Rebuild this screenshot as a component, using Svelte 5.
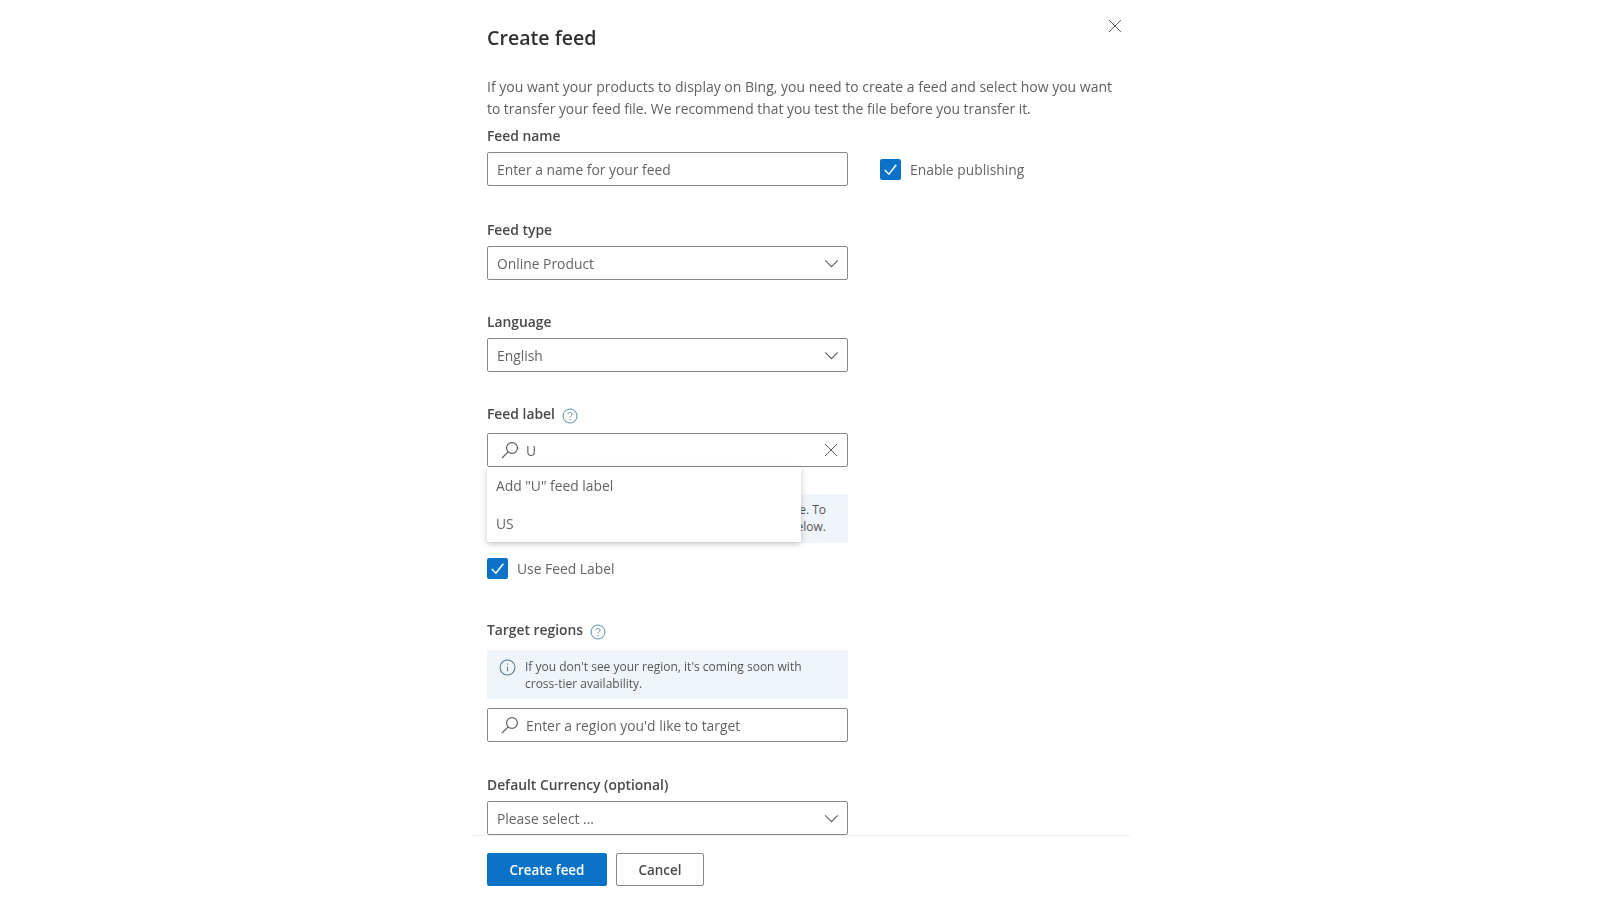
<script>
	const groups = [
		{ label: "Feed type", value: "Online Product" },
		{ label: "Language", value: "English" }
	];
</script>

{#snippet chevron()}
	<svg class="chevron" viewBox="0 0 16 10" aria-hidden="true">
		<path d="M1 1.5 8 8.5 15 1.5" />
	</svg>
{/snippet}

{#snippet search()}
	<svg class="search" viewBox="0 0 18 18" aria-hidden="true">
		<circle cx="11" cy="7" r="5.4" />
		<path d="M7.2 10.8 1 17" />
	</svg>
{/snippet}

{#snippet help()}
	<svg class="help" viewBox="0 0 16 16" aria-hidden="true">
		<circle cx="8" cy="8" r="7" />
		<path d="M6 6.3C6 3.8 10 3.8 10 6.2 10 7.8 8 7.8 8 9.6" />
		<circle class="dot" cx="8" cy="11.8" r="0.7" />
	</svg>
{/snippet}

{#snippet checkbox()}
	<span class="checkbox">
		<svg viewBox="0 0 20 20" aria-hidden="true">
			<path d="M4.5 10.5 8.5 14.5 15.5 5.5" />
		</svg>
	</span>
{/snippet}

<div class="panel">
	<button class="close" aria-label="Close">
		<svg viewBox="0 0 14 14"><path d="M1 1 13 13M13 1 1 13" /></svg>
	</button>

	<h1>Create feed</h1>
	<p class="intro">
		<span class="line-one">If you want your products to display on Bing, you need to create a feed and select how you want</span>
		to transfer your feed file. We recommend that you test the file before you transfer it.
	</p>

	<div class="label first">Feed name</div>
	<div class="row">
		<div class="control placeholder">Enter a name for your feed</div>
		<div class="check publish">
			{@render checkbox()}
			<span>Enable publishing</span>
		</div>
	</div>

	{#each groups as group, i}
		<div class="label" class:tight={i === 1}>{group.label}</div>
		<div class="control">
			<span>{group.value}</span>
			{@render chevron()}
		</div>
	{/each}

	<div class="label tight with-help feed-label">Feed label {@render help()}</div>
	<div class="control with-search">
		{@render search()}
		<span>U</span>
		<svg class="clear" viewBox="0 0 14 14" aria-hidden="true"><path d="M1 1 13 13M13 1 1 13" /></svg>
	</div>

	<div class="label-notice">
		<div class="notice behind">
			<p>Feed labels replace the country of sale. To<br />use a feed label, select one below.</p>
		</div>
		<ul class="menu">
			<li>Add "U" feed label</li>
			<li>US</li>
		</ul>
	</div>

	<div class="check use-label">
		{@render checkbox()}
		<span>Use Feed Label</span>
	</div>

	<div class="label regions with-help">Target regions {@render help()}</div>
	<div class="notice info">
		<svg class="info-icon" viewBox="0 0 16 16" aria-hidden="true">
			<circle cx="8" cy="8" r="7" />
			<path d="M8 7v4.5M8 4.3v1.2" />
		</svg>
		<p>If you don't see your region, it's coming soon with<br />cross-tier availability.</p>
	</div>
	<div class="control with-search region-input placeholder">
		{@render search()}
		<span>Enter a region you'd like to target</span>
	</div>

	<div class="label currency">Default Currency (optional)</div>
	<div class="control">
		<span>Please select ...</span>
		{@render chevron()}
	</div>

	<div class="actions">
		<button class="primary">Create feed</button>
		<button class="secondary">Cancel</button>
	</div>
</div>

<style>
	:global(body) {
		background: #fff;
	}
	.panel {
		position: relative;
		box-sizing: border-box;
		width: 658px;
		height: 900px;
		margin-left: 472px;
		padding: 24px 0 0 15px;
		font-family: "Open Sans", "Noto Sans", sans-serif;
		font-size: 13.85px;
		color: #4a4a4a;
		filter: blur(0.45px);
		overflow: hidden;
	}
	h1 {
		margin: 0;
		font-size: 19.6px;
		line-height: 28px;
		font-weight: 600;
		color: #323130;
	}
	.intro {
		margin: 24px 0 0;
		width: 630px;
		line-height: 22px;
		color: #5f5f5f;
	}
	.line-one {
		display: block;
		font-size: 14px;
	}
	.close {
		position: absolute;
		top: 19px;
		right: 8px;
		width: 14px;
		height: 14px;
		padding: 0;
		border: 0;
		background: none;
	}
	.close svg,
	.clear {
		display: block;
		width: 14px;
		height: 14px;
		fill: none;
		stroke: #605e5c;
		stroke-width: 1;
	}
	.label {
		margin: 34px 0 6px;
		font-weight: 600;
		line-height: 20px;
		color: #4a4a4a;
	}
	.label.first {
		margin-top: 6px;
	}
	.label.tight {
		margin-top: 32px;
	}
	.label.feed-label {
		margin-bottom: 9px;
	}
	.with-help {
		display: flex;
		align-items: center;
		gap: 7px;
	}
	.help {
		width: 16px;
		height: 16px;
		margin-top: 3px;
		fill: none;
		stroke: #5b8a9e;
		stroke-width: 1;
	}
	.help .dot {
		fill: #5b8a9e;
		stroke: none;
	}
	.row {
		display: flex;
		align-items: center;
		gap: 32px;
	}
	.control {
		box-sizing: border-box;
		display: flex;
		align-items: center;
		justify-content: space-between;
		width: 361px;
		height: 34px;
		padding: 0 8px 0 9px;
		border: 1.5px solid #8a8886;
		border-radius: 2px;
		background: #fff;
		color: #666462;
	}
	.row .control {
		flex: none;
	}
	.chevron {
		width: 15px;
		height: 9px;
		fill: none;
		stroke: #605e5c;
		stroke-width: 1.2;
	}
	.with-search {
		justify-content: flex-start;
		gap: 7px;
		padding-left: 13px;
	}
	.search {
		width: 18px;
		height: 18px;
		flex: none;
		fill: none;
		stroke: #605e5c;
		stroke-width: 1.2;
	}
	.clear {
		margin-left: auto;
		margin-right: 1px;
	}
	.check {
		display: flex;
		align-items: center;
		gap: 9px;
		color: #666462;
	}
	.checkbox {
		flex: none;
		width: 21px;
		height: 21px;
		border-radius: 2px;
		background: #0a73c8;
	}
	.checkbox svg {
		display: block;
		width: 21px;
		height: 21px;
		fill: none;
		stroke: #fff;
		stroke-width: 1.4;
	}
	.label-notice {
		position: relative;
		width: 361px;
		margin-top: 27px;
	}
	.notice {
		box-sizing: border-box;
		width: 361px;
		background: #f0f5fb;
		font-size: 12px;
		line-height: 16.5px;
		color: #555;
	}
	.notice p {
		margin: 0;
	}
	.behind {
		display: flex;
		justify-content: flex-end;
		align-items: center;
		height: 49px;
		padding-right: 22px;
	}
	.behind p {
		white-space: nowrap;
		text-align: right;
	}
	.menu {
		position: absolute;
		left: 0;
		top: -27px;
		width: 314px;
		height: 75px;
		margin: 0;
		padding: 0;
		list-style: none;
		background: #fff;
		box-shadow: 0 2px 6px rgba(0, 0, 0, 0.22);
		color: #666462;
	}
	.menu li {
		height: 37.5px;
		line-height: 37.5px;
		padding-left: 9px;
	}
	.use-label {
		margin-top: 15px;
	}
	.label.regions {
		margin: 41px 0 10px;
	}
	.info {
		display: flex;
		align-items: flex-start;
		gap: 9px;
		height: 49px;
		padding: 9px 0 0 12px;
	}
	.info-icon {
		flex: none;
		width: 17px;
		height: 17px;
		fill: none;
		stroke: #5a7a94;
		stroke-width: 1;
	}
	.region-input {
		margin-top: 9px;
	}
	.label.currency {
		margin-top: 33px;
	}
	.actions {
		display: flex;
		gap: 9px;
		box-sizing: border-box;
		margin-top: 0;
		padding: 17px 0 0 15px;
		margin-left: -15px;
		border-top: 1px solid #eeeeee;
	}
	.actions button {
		box-sizing: border-box;
		height: 33px;
		border-radius: 2px;
		font: 600 13.4px "Open Sans", "Noto Sans", sans-serif;
	}
	.primary {
		width: 120px;
		border: 0;
		background: #0a73c8;
		color: #fff;
	}
	.secondary {
		width: 88px;
		border: 1.5px solid #8a8886;
		background: #fff;
		color: #4a4a4a;
	}
</style>
